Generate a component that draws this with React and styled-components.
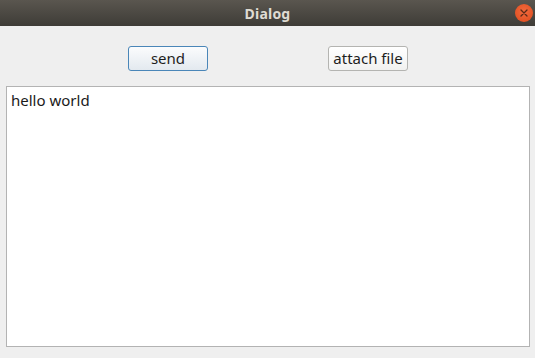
import React from "react";
import styled, { createGlobalStyle } from "styled-components";

const Global = createGlobalStyle`
  html, body { margin: 0; padding: 0; background: #efefef; }
  body { font-family: "Noto Sans", "Open Sans", sans-serif; }
`;

const Window = styled.div`
  width: 535px;
  height: 358px;
  display: flex;
  flex-direction: column;
  background: #efefef;
  overflow: hidden;
`;

const TitleBar = styled.div`
  height: 26px;
  flex: none;
  position: relative;
  display: flex;
  align-items: center;
  justify-content: center;
  background: linear-gradient(#5a564f, #3e3c37);
  color: #dfdbd2;
  font-family: "Noto Sans", sans-serif;
  font-weight: 700;
  font-size: 14px;
  letter-spacing: 0.2px;
`;

const CloseButton = styled.div`
  position: absolute;
  right: 2px;
  top: 4px;
  width: 18px;
  height: 18px;
  border-radius: 50%;
  background: radial-gradient(circle at 50% 40%, #f26a3d, #dd4a1c);
  display: flex;
  align-items: center;
  justify-content: center;
`;

const Toolbar = styled.div`
  display: flex;
  padding: 20px 0 15px 128px;
  gap: 120px;
`;

const Button = styled.button`
  width: 80px;
  height: 25px;
  box-sizing: border-box;
  padding: 0;
  border-radius: 3px;
  border: 1px solid ${(p) => (p.$focused ? "#4a86b8" : "#b4b4b1")};
  background: ${(p) =>
    p.$focused ? "linear-gradient(#fbfcfd, #e3e9ef)" : "linear-gradient(#ffffff, #f1f1f0)"};
  color: #1e1e1e;
  font-family: "Noto Sans", sans-serif;
  font-size: 15px;
  line-height: 1;
  white-space: nowrap;
`;

const TextArea = styled.div`
  margin: 0 5px 0 6px;
  height: 261px;
  box-sizing: border-box;
  background: #ffffff;
  border: 1px solid #b3b3b3;
  padding: 3px 4px;
  color: #1a1a1a;
  font-family: "Noto Sans", sans-serif;
  font-size: 15px;
  line-height: 20px;
`;

export default function App() {
  return (
    <>
      <Global />
      <Window>
        <TitleBar>
          Dialog
          <CloseButton>
            <svg width="8" height="8" viewBox="0 0 8 8">
              <path d="M1 1L7 7M7 1L1 7" stroke="#5a2a18" strokeWidth="1.3" strokeLinecap="round" />
            </svg>
          </CloseButton>
        </TitleBar>
        <Toolbar>
          <Button $focused>send</Button>
          <Button>attach file</Button>
        </Toolbar>
        <TextArea>hello world</TextArea>
      </Window>
    </>
  );
}
